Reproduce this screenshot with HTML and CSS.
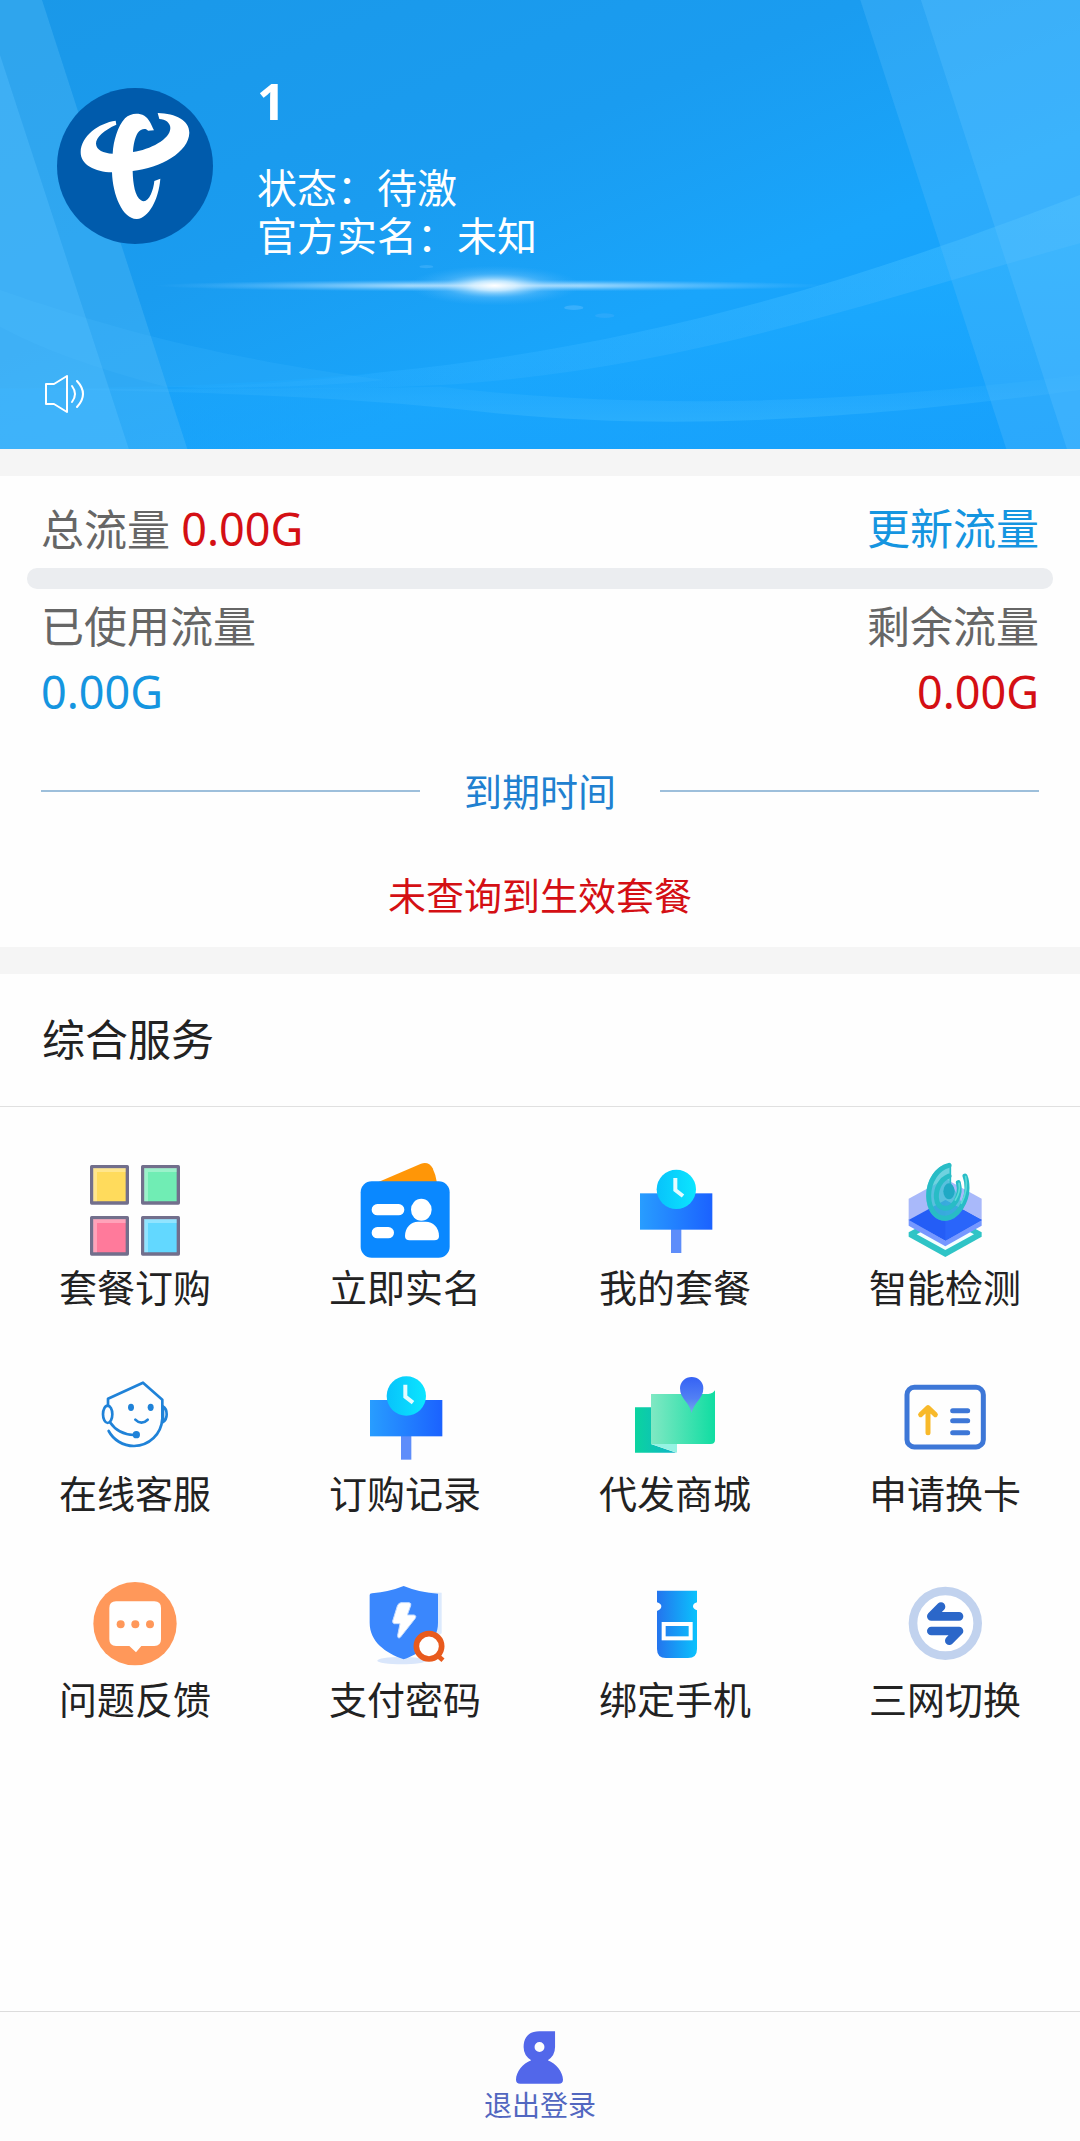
FILE: index.html
```html
<!DOCTYPE html>
<html lang="zh-CN">
<head>
<meta charset="utf-8">
<meta name="viewport" content="width=device-width, initial-scale=1">
<title>综合服务</title>
<link rel="stylesheet" href="styles.css">
</head>
<body>
<header class="hero">
  <svg class="hero-bg" viewBox="0 0 1568 1347" preserveAspectRatio="none" aria-hidden="true">
    <defs>
      <linearGradient id="sky" x1="0" y1="0" x2="1" y2="1">
        <stop offset="0" stop-color="#1a98e8"/><stop offset=".4" stop-color="#1a9cf0"/><stop offset=".65" stop-color="#19a5fb"/><stop offset="1" stop-color="#169efb"/>
      </linearGradient>
      <linearGradient id="wave" x1="0" y1="0" x2="1" y2="0">
        <stop offset="0" stop-color="#38b4ff" stop-opacity=".1"/><stop offset=".5" stop-color="#38b4ff" stop-opacity=".35"/><stop offset="1" stop-color="#48bbff" stop-opacity=".4"/>
      </linearGradient>
      <linearGradient id="sea" x1="0" y1="0" x2="0" y2="1">
        <stop offset="0" stop-color="#1fb0ff" stop-opacity=".8"/><stop offset="1" stop-color="#18a4ff" stop-opacity=".3"/>
      </linearGradient>
      <linearGradient id="swell" x1="0" y1="0" x2="0" y2="1">
        <stop offset="0" stop-color="#3ab5ff" stop-opacity=".1"/><stop offset="1" stop-color="#3ab8ff" stop-opacity=".5"/>
      </linearGradient>
      <radialGradient id="flare">
        <stop offset="0" stop-color="#fff"/><stop offset=".25" stop-color="#d8f0ff" stop-opacity=".85"/><stop offset=".6" stop-color="#7cc8fc" stop-opacity=".35"/><stop offset="1" stop-color="#4ab4fa" stop-opacity="0"/>
      </radialGradient>
      <radialGradient id="streak">
        <stop offset="0" stop-color="#fff" stop-opacity=".9"/><stop offset=".5" stop-color="#a4daff" stop-opacity=".55"/><stop offset="1" stop-color="#6cc2ff" stop-opacity="0"/>
      </radialGradient>
    </defs>
    <rect width="1568" height="1347" fill="url(#sky)"/>
    <path d="M0 1165Q300 1170 560 1115C900 1045 1200 880 1568 585V1347H0Z" fill="url(#sea)"/>
    <path d="M0 870C180 1000 340 1080 560 1140Q420 1170 240 1160Q90 1080 0 980Z" fill="#3ab4ff" opacity=".22"/>
    <path d="M240 1165Q440 1150 560 1115C900 1045 1200 880 1568 585V730C1300 880 1000 1110 640 1155Q440 1175 240 1165Z" fill="url(#wave)"/>
    <path d="M640 1160C900 1225 1200 1220 1568 1125V1170C1200 1270 950 1290 700 1235C500 1190 300 1175 0 1165Q350 1170 640 1160Z" fill="url(#swell)"/>
    <path d="M0 0H61L272 1347H0Z" fill="#5abcf5" opacity=".35"/>
    <path d="M0 165L187 1347H0Z" fill="#5cc4ff" opacity=".35"/>
    <path d="M1249 0H1568V1347H1461Z" fill="#58bdfb" opacity=".3"/>
    <path d="M1337 0H1568V1347H1549Z" fill="#60c4ff" opacity=".3"/>
    <ellipse cx="715" cy="857" rx="490" ry="18" fill="url(#streak)"/>
    <ellipse cx="718" cy="857" rx="125" ry="60" fill="url(#flare)"/>
    <ellipse cx="833" cy="923" rx="14" ry="7" fill="#58bcff" opacity=".5"/>
    <ellipse cx="878" cy="947" rx="14" ry="7" fill="#40b0fc" opacity=".4"/>
    <ellipse cx="619" cy="800" rx="10" ry="5" fill="#58bcff" opacity=".4"/>
  </svg>
  <div class="profile">
    <svg class="avatar" viewBox="51 54 468 468" role="img" aria-label="中国电信">
      <circle cx="285" cy="288" r="234" fill="#005bac"/>
      <path fill="#fff" d="M227 152L229 164C192 180 167 203 168 221C169 240 190 249 218 251C220 213 233 169 255 145C270 130 294 127 313 137C326 145 334 163 342 181L324 182C319 174 302 175 293 189C284 204 280 227 279 246C330 239 391 208 391 174C391 158 376 148 358 147L353 129C408 131 448 151 448 188C447 246 361 294 278 303C279 343 285 379 303 391C324 404 340 364 343 333L361 326C356 389 326 444 291 447C249 449 218 376 216 307C165 306 121 284 122 246C123 198 176 159 227 152Z"/>
    </svg>
    <div class="profile-text">
      <h1 class="name">1</h1>
      <p class="status">状态：待激</p>
      <p class="status">官方实名：未知</p>
    </div>
  </div>
  <button class="speaker" type="button" aria-label="公告">
    <svg viewBox="0 0 40 38" width="40" height="38" fill="none" stroke="#fff" stroke-width="2" stroke-linecap="round" stroke-linejoin="round" aria-hidden="true">
      <path d="M1 9H9L22 1V37L9 29H1Z"/><path d="M27 11Q33 19 27 27"/><path d="M32 6Q44 19 32 32"/>
    </svg>
  </button>
</header>

<main>
  <section class="usage">
    <div class="row">
      <p>总流量 <span class="amount red">0.00G</span></p>
      <a class="refresh" href="#">更新流量</a>
    </div>
    <div class="bar" role="progressbar" aria-label="已使用流量" aria-valuenow="0" aria-valuemin="0" aria-valuemax="100"></div>
    <div class="row">
      <p>已使用流量</p>
      <p>剩余流量</p>
    </div>
    <div class="row">
      <p class="amount blue">0.00G</p>
      <p class="amount red">0.00G</p>
    </div>
    <h2 class="expiry">到期时间</h2>
    <p class="notice">未查询到生效套餐</p>
  </section>

  <section class="services">
    <h2 class="title">综合服务</h2>
    <nav class="grid">
      <a class="item" href="#">
        <svg class="icon" viewBox="78 63 294 294" aria-hidden="true">
          <g stroke="#726f8c" stroke-width="10" stroke-linejoin="round">
            <rect x="95" y="80" width="107" height="109" fill="#ffdb5c"/><rect x="248" y="80" width="107" height="109" fill="#70edb4"/>
            <rect x="95" y="233" width="107" height="109" fill="#ff7a9b"/><rect x="248" y="233" width="107" height="109" fill="#62d8ff"/>
          </g>
          <path d="M105 184V90H197M258 184V90H350M105 337V243H197M258 337V243H350" fill="none" stroke="#fff" stroke-opacity=".3" stroke-width="12"/>
        </svg>
        <span>套餐订购</span>
      </a>
      <a class="item" href="#">
        <svg class="icon" viewBox="888 63 294 294" aria-hidden="true">
          <path d="M950 128L1083 71Q1107 64 1118 85Q1127 104 1131 128Z" fill="#ff9607"/>
          <rect x="902" y="124" width="267" height="229" rx="33" fill="#0a88ff"/>
          <g fill="#fff"><rect x="935" y="192" width="98" height="34" rx="17"/><rect x="935" y="261" width="67" height="34" rx="17"/><ellipse cx="1084" cy="209" rx="31" ry="33"/><path d="M1035 288C1035 262 1053 245 1074 245H1097C1119 245 1137 262 1137 288Q1137 301 1123 301H1049Q1035 301 1035 288Z"/></g>
        </svg>
        <span>立即实名</span>
      </a>
      <a class="item" href="#">
        <svg class="icon" viewBox="78 63 294 294" aria-hidden="true">
          <defs>
            <linearGradient id="board" x1="0" x2="1" y1="0" y2="0"><stop offset="0" stop-color="#289dff"/><stop offset="1" stop-color="#1b62ff"/></linearGradient>
            <linearGradient id="dial" x1="0" x2="1" y1="0" y2="0"><stop offset="0" stop-color="#08c3fb"/><stop offset="1" stop-color="#0be6ff"/></linearGradient>
            <g id="clock-board">
              <rect x="213" y="265" width="31" height="74" fill="#5e8dfa"/>
              <rect x="120" y="160" width="217" height="109" fill="url(#board)"/>
              <circle cx="229" cy="148" r="59" fill="url(#dial)"/>
              <path d="M226 114V150L249 168" fill="none" stroke="#e4fcff" stroke-width="12"/>
            </g>
          </defs>
          <use href="#clock-board"/>
        </svg>
        <span>我的套餐</span>
      </a>
      <a class="item" href="#">
        <svg class="icon" viewBox="888 63 294 294" aria-hidden="true">
          <path d="M926 277L1036 219L1145 277V290L1036 351L926 290Z" fill="#2fc4c6"/><path d="M950 283L1036 236L1122 283L1036 330Z" fill="#f4ffff"/>
          <path d="M926 238V257L1036 319L1145 257V238L1036 302Z" fill="#7698ff"/>
          <path d="M926 176L1036 116L1145 176V240L1036 302L926 240Z" fill="#a9b9fa"/>
          <path d="M926 240L1036 180L1145 240L1036 302Z" fill="#245df6"/><path d="M1036 180L1145 240L1036 302Z" fill="#2a65fa"/>
          <path d="M1053 73C1015 67 980 112 979 165C978 215 1005 243 1037 242C1060 240 1080 222 1092 200L1053 130Z" fill="#3fc3d4" opacity=".75"/>
          <g fill="none" stroke-linecap="round">
            <path d="M1047 76C1012 84 986 124 986 168C987 212 1011 236 1037 235C1073 232 1101 184 1101 144Q1101 122 1095 108" stroke="#28bcc6" stroke-width="15"/>
            <path d="M1047 108C1022 118 1008 144 1009 172C1012 211 1048 216 1068 183Q1083 157 1075 128" stroke="#28bcc6" stroke-width="15"/>
            <path d="M1097 110Q1105 150 1084 190M1077 130Q1082 155 1066 180" stroke="#5cdcd8" stroke-width="5"/>
          </g>
          <path d="M1051 72V132" stroke="#28bcc6" stroke-width="5"/>
          <ellipse cx="1047" cy="154" rx="17" ry="24" fill="#20a9c4"/>
        </svg>
        <span>智能检测</span>
      </a>
      <a class="item" href="#">
        <svg class="icon" viewBox="78 51 294 294" aria-hidden="true">
          <g fill="none" stroke="#1f82d8" stroke-width="8" stroke-linecap="round" stroke-linejoin="round">
            <path d="M144 168V146L249 98L307 149V206C304 253 268 287 222 288C188 288 160 269 146 243"/>
            <ellipse cx="143" cy="193" rx="14" ry="26"/><path d="M309 169Q320 175 320 193Q320 210 309 216Z"/>
            <path d="M150 217Q175 254 222 255"/><path d="M226 209Q244 227 263 209"/>
          </g>
          <g fill="#1f82d8"><ellipse cx="213" cy="172" rx="9" ry="11"/><ellipse cx="272" cy="172" rx="9" ry="11"/><circle cx="229" cy="254" r="11"/></g>
        </svg>
        <span>在线客服</span>
      </a>
      <a class="item" href="#">
        <svg class="icon" viewBox="78 61 294 294" aria-hidden="true"><use href="#clock-board"/></svg>
        <span>订购记录</span>
      </a>
      <a class="item" href="#">
        <svg class="icon" viewBox="78 51 294 294" aria-hidden="true">
          <defs>
            <linearGradient id="fold" x1="0" x2="1" y1="0" y2="0"><stop offset="0" stop-color="#80e8c3"/><stop offset="1" stop-color="#10dda2"/></linearGradient>
            <linearGradient id="back" x1="0" x2="1" y1="0" y2="0"><stop offset="0" stop-color="#0bd49f"/><stop offset="1" stop-color="#10b4c8"/></linearGradient>
            <linearGradient id="pin" x1="0" x2="0" y1="0" y2="1"><stop offset="0" stop-color="#3562f5"/><stop offset=".6" stop-color="#5280f4"/><stop offset="1" stop-color="#76a9e8"/></linearGradient>
          </defs>
          <path d="M105 172H153V282L229 308H105Z" fill="url(#back)"/>
          <path d="M153 282H231V308Z" fill="#95f3e3"/>
          <path d="M153 132H325Q340 130 345 121V270Q345 282 332 282H153Z" fill="url(#fold)"/>
          <path d="M275 189C268 156 240 147 240 115A35 34 0 0 1 310 115C310 147 282 156 275 189Z" fill="url(#pin)"/>
        </svg>
        <span>代发商城</span>
      </a>
      <a class="item" href="#">
        <svg class="icon" viewBox="888 51 294 294" aria-hidden="true">
          <g fill="none" stroke="#3d77d7" stroke-width="15" stroke-linecap="round" stroke-linejoin="round">
            <rect x="921" y="112" width="229" height="179" rx="22"/>
            <path d="M1058 182H1103M1058 212H1103M1058 248H1103"/>
            <path d="M984 248V175M962 194L984 173L1006 194" stroke="#f8b92a"/>
          </g>
        </svg>
        <span>申请换卡</span>
      </a>
      <a class="item" href="#">
        <svg class="icon" viewBox="78 39 294 294" aria-hidden="true">
          <circle cx="225" cy="191" r="125" fill="#ff985a"/>
          <path d="M168 124H283Q303 124 303 144V238Q303 258 283 258H244L228 277L208 258H168Q148 258 148 238V144Q148 124 168 124Z" fill="#fff"/>
          <g fill="#ff985a"><circle cx="182" cy="193" r="12"/><circle cx="226" cy="193" r="12"/><circle cx="270" cy="193" r="12"/></g>
        </svg>
        <span>问题反馈</span>
      </a>
      <a class="item" href="#">
        <svg class="icon" viewBox="888 39 294 294" aria-hidden="true">
          <ellipse cx="1025" cy="302" rx="73" ry="11" fill="#d9e6fb"/>
          <path d="M1070 96L1145 98V220L1100 250Z" fill="#dceafd"/>
          <path d="M1031 78Q1079 98 1134 101V188C1134 248 1083 278 1031 298C976 278 929 245 929 188V105Q929 101 936 100Q989 95 1031 78Z" fill="#3a87fd"/>
          <path d="M1023 128H1047Q1055 129 1052 137L1042 165H1062Q1071 167 1065 176L1021 232Q1013 238 1013 226L1020 191H1003Q997 190 998 183L1012 138Q1015 129 1023 128Z" fill="#fff" stroke="#c5dcff" stroke-width="3"/>
          <circle cx="1107" cy="259" r="38" fill="#fff" stroke="#e85a1d" stroke-width="17"/>
          <path d="M1134 288L1149 301" stroke="#e85a1d" stroke-width="14"/>
        </svg>
        <span>支付密码</span>
      </a>
      <a class="item" href="#">
        <svg class="icon" viewBox="78 39 294 294" aria-hidden="true">
          <defs><linearGradient id="bottle" x1="0" x2="1" y1="0" y2="0"><stop offset="0" stop-color="#2474ee"/><stop offset="1" stop-color="#0ac2fd"/></linearGradient></defs>
          <path d="M171 92H291V127Q279 130 279 139Q279 147 291 151V267Q291 294 264 294H198Q171 294 171 267V153Q184 148 184 139Q184 131 171 127Z" fill="url(#bottle)"/>
          <rect x="191" y="192" width="81" height="43" fill="none" stroke="#fff" stroke-width="12"/>
        </svg>
        <span>绑定手机</span>
      </a>
      <a class="item" href="#">
        <svg class="icon" viewBox="888 39 294 294" aria-hidden="true">
          <circle cx="1036" cy="190" r="97" fill="#fff" stroke="#c1d2ee" stroke-width="26"/>
          <g fill="none" stroke="#2b67c9" stroke-width="26" stroke-linecap="round" stroke-linejoin="round">
            <path d="M1077 169H994L1023 140"/><path d="M994 213H1077L1048 242"/>
          </g>
        </svg>
        <span>三网切换</span>
      </a>
    </nav>
  </section>
</main>

<footer class="footer">
  <a class="logout" href="#">
    <svg class="logout-icon" viewBox="231 122 142 159" aria-hidden="true">
      <path fill-rule="evenodd" fill="#5267ea" d="M349 122V170Q349 196 327 210C352 219 373 246 373 269Q373 281 360 281H244Q231 281 231 269C231 246 251 219 277 210Q254 196 254 170C254 139 272 122 301 122ZM302 155A15 15 0 1 0 302 185A15 15 0 1 0 302 155Z"/>
    </svg>
    <span>退出登录</span>
  </a>
</footer>
</body>
</html>
```

FILE: styles.css
```css
* {
  box-sizing: border-box;
}

body {
  display: flex;
  flex-direction: column;
  min-height: 100vh;
  margin: 0;
  background: #fefefe;
  color: #222;
  font-family: "Noto Sans", "Noto Sans CJK SC", sans-serif;
  font-size: 38px;
  line-height: 56px;
}

h1,
h2,
p {
  margin: 0;
  font-weight: 400;
}

a {
  color: inherit;
  text-decoration: none;
}

svg {
  display: block;
}

.hero {
  position: relative;
  display: flex;
  flex-direction: column;
  justify-content: space-between;
  align-items: flex-start;
  min-height: 449px;
  padding: 70px 45px 36px;
  background: #1a9ff5;
  color: #fff;
}

.hero-bg {
  position: absolute;
  inset: 0;
  width: 100%;
  height: 100%;
}

.profile {
  position: relative;
  display: flex;
  align-items: flex-start;
  gap: 44px;
  padding-left: 12px;
}

.avatar {
  flex: none;
  width: 156px;
  height: 156px;
  margin-top: 18px;
}

.name {
  margin-bottom: 32px;
  font-size: 50px;
  font-weight: 700;
  line-height: 62px;
}

.status {
  font-size: 40px;
  line-height: 48px;
}

.speaker {
  position: relative;
  padding: 0;
  border: 0;
  background: none;
  cursor: pointer;
}

.usage {
  padding: 23px 27px 24px;
  border-top: 27px solid #f5f5f5;
  border-bottom: 27px solid #f5f5f5;
}

.row {
  display: flex;
  justify-content: space-between;
  padding: 0 14px;
  color: #666;
  font-size: 43px;
  line-height: 60px;
}

.bar {
  height: 21px;
  margin: 8px 0;
  border-radius: 10px;
  background: #ebedf0;
}

.amount {
  font-size: 45px;
  line-height: 70px;
}

.row span.amount {
  line-height: 60px;
}

.red {
  color: #d40f14;
}

.blue,
.refresh {
  color: #1595e0;
}

.expiry {
  display: flex;
  align-items: center;
  gap: 44px;
  margin: 36px 14px 48px;
  color: #2080d0;
  font-size: 38px;
}

.expiry::before,
.expiry::after {
  flex: 1;
  height: 2px;
  background: #9dbfdb;
  content: "";
}

.notice {
  color: #d40f14;
  text-align: center;
}

.title {
  padding: 36px 42px;
  border-bottom: 1px solid #e0e0e0;
  font-size: 43px;
  line-height: 60px;
}

.grid {
  display: grid;
  grid-template-columns: repeat(4, 1fr);
  row-gap: 52px;
  padding: 54px 0;
}

.item {
  display: flex;
  flex-direction: column;
  align-items: center;
}

.icon {
  width: 98px;
  height: 98px;
}

.footer {
  display: flex;
  justify-content: center;
  margin-top: auto;
  padding: 19px 0 18px;
  border-top: 1px solid #dcdcdc;
  background: #fdfdfd;
}

.logout {
  display: flex;
  flex-direction: column;
  align-items: center;
  gap: 3px;
  color: #5267c0;
  font-size: 28px;
  line-height: 36px;
}

.logout-icon {
  width: 47px;
  height: 53px;
}
```
